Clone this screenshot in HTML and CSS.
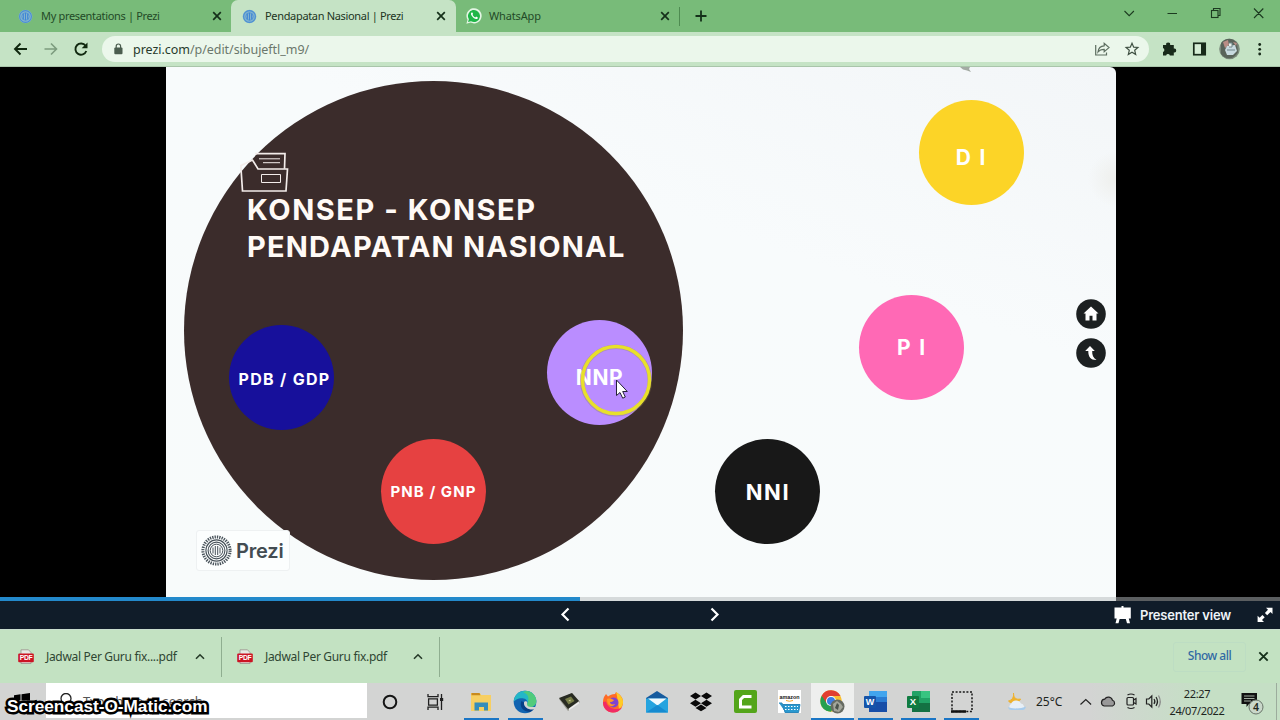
FILE: index.html
```html
<!DOCTYPE html>
<html lang="id">
    <head>
        <meta charset="utf-8">
        <title>Pendapatan Nasional | Prezi</title>
        <link rel="stylesheet" href="styles.css">
    </head>
    <body>
        <!-- shared shapes -->
        <svg class="defs" width="0" height="0">
            <symbol id="x" viewBox="0 0 10 10"><path d="M1.2 1.2l7.6 7.6M8.8 1.2L1.2 8.8" stroke="#15301a" stroke-width="1.7"/></symbol>
            <symbol id="prezi" viewBox="0 0 16 16">
                <circle cx="8" cy="8" r="7.3" fill="#84b4cf"/>
                <circle cx="8" cy="8" r="6.3" fill="none" stroke="#4a8fd4" stroke-width="1.2"/>
                <circle cx="8" cy="8" r="4" fill="none" stroke="#4a8fd4" stroke-width=".8"/>
                <path d="M5.7 5v6M8 4v8M10.3 5v6" stroke="#3f86d6" stroke-width="1.1"/>
            </symbol>
        </svg>

        <div class="tabs">
            <div class="tab">
                <svg class="fav" width="15" height="15"><use href="#prezi"/></svg>
                <span class="name">My presentations | Prezi</span>
                <svg class="close" width="10" height="10"><use href="#x"/></svg>
            </div>
            <div class="tab active">
                <svg class="fav" width="15" height="15"><use href="#prezi"/></svg>
                <span class="name">Pendapatan Nasional | Prezi</span>
                <svg class="close" width="10" height="10"><use href="#x"/></svg>
            </div>
            <div class="tab last">
                <svg class="fav" width="16" height="16" viewBox="0 0 16 16">
                    <path d="M.4 15.7l1.1-4A7.6 7.6 0 1 1 4.6 14.6z" fill="#e4f6e4"/>
                    <path d="M2 14.1l.9-2.9A6 6 0 1 1 5 13.2z" fill="#20b648"/>
                    <path d="M5.6 4.5c-1 .7-.8 2 .3 3.6 1.4 2 3.2 3.2 4.6 3 1-.2 1.5-1 1.3-1.7l-1.7-.8-.8.9C8 9 7 8 6.5 6.8l.6-.8-.7-1.6z" fill="#fff"/>
                </svg>
                <span class="name">WhatsApp</span>
                <svg class="close" width="10" height="10"><use href="#x"/></svg>
            </div>
            <svg class="plus" width="12" height="12" viewBox="0 0 12 12"><path d="M6 .5v11M.5 6h11" stroke="#15301a" stroke-width="1.8"/></svg>
            <svg class="win" width="156" height="32" viewBox="1116 0 156 32" fill="none" stroke="#1c3a20" stroke-width="1.1">
                <path d="M1124.5 11l4.7 4.7 4.7-4.7M1167.5 13.5h9.5"/>
                <rect x="1211.5" y="10.5" width="6.5" height="7"/>
                <path d="M1213.5 10.5v-2h6.5v7h-2M1254 8.500l9.300 9.500M1263.300 8.500l-9.300 9.500"/>
            </svg>
        </div>

        <div class="toolbar">
            <svg class="nav" width="102" height="34" viewBox="0 32 102 34" fill="none" stroke="#10280f" stroke-width="1.9">
                <path d="M27 49H15.500M20.500 43.500L15 49l5.500 5.500"/>
                <path d="M44.500 49H56M51 43.500l5.500 5.500-5.500 5.500" stroke="#7c9c7e" stroke-width="1.6"/>
                <path d="M85.600 45.800A5.600 5.600 0 1 0 86.300 51"/>
                <path d="M87.500 42.500v5.800h-5.800z" fill="#10280f" stroke="none"/>
            </svg>
            <div class="address">
                <svg width="9" height="12" viewBox="0 0 9 12"><rect x=".3" y="4.5" width="8.2" height="6.7" rx="1" fill="#4b5d4f"/><path d="M2.200 5V3.200a2.200 2.200 0 0 1 4.400 0V5" fill="none" stroke="#4b5d4f" stroke-width="1.2"/></svg>
                <span class="url"><b>prezi.com</b>/p/edit/sibujeftl_m9/</span>
                <svg class="share" width="46" height="16" viewBox="1094 41 46 16" fill="none" stroke="#5d6e60" stroke-width="1.2">
                    <path d="M1095.700 45v10h10.800v-2.500"/>
                    <path d="M1098 52c.4-4 2.500-6 6.200-6.200v-2.400l4.800 4.200-4.800 4.200v-2.500c-2.900 0-4.800.8-6.200 2.700z"/>
                    <path d="M1132 43.200l1.700 4 4.200.3-3.200 2.800 1 4.200-3.700-2.300-3.700 2.300 1-4.200-3.200-2.800 4.200-.3z" stroke="#3f5042"/>
                </svg>
            </div>
            <svg class="ext" width="120" height="34" viewBox="1156 32 120 34">
                <path d="M1163 45h3.200a2 2 0 1 1 3.900 0h3.700v3.600a2 2 0 1 1 0 3.900v3h-3.900a2 2 0 0 0-3.800 0H1163v-3.600a2 2 0 0 0 0-3.800z" fill="#182a1a"/>
                <rect x="1193.800" y="43.300" width="11.400" height="11.400" fill="#d5edd5" stroke="#182a1a" stroke-width="1.7"/>
                <rect x="1201" y="43" width="5" height="12" fill="#182a1a"/>
                <circle cx="1229.500" cy="49" r="10.300" fill="#7b8a7c"/>
                <path d="M1221 43c5-6 12-5 16 0l1 9c-4 8-13 8-17 2z" fill="#59645a"/>
                <path d="M1223 42l5-2 1 5-4 3zM1233 42l4 1-1 3z" fill="#b98d85"/>
                <path d="M1227 46l8-1 2 6-4 4h-6l-2-5z" fill="#c8dadf"/>
                <path d="M1229 43h3v4h-3M1227 50h8" fill="#e9f0eb" stroke="#70868a"/>
                <circle cx="1259.700" cy="44.500" r="1.4" fill="#182a1a"/><circle cx="1259.700" cy="49.300" r="1.4" fill="#182a1a"/><circle cx="1259.700" cy="54" r="1.4" fill="#182a1a"/>
            </svg>
        </div>

        <div class="stage">
            <div class="slide">
                <div class="big"></div>
                <svg class="folder" width="52" height="44" viewBox="238 150 52 44" fill="none" stroke="#f3ecea" stroke-width="1.7">
                    <path d="M241 168.500v-3l11.500-5.500 5.500 9h29.500l-1.500 22h-43.500z"/>
                    <path d="M255 153.700h30l-.5 15"/>
                    <path d="M259 158.800h21M263 162.700h17M261.500 174.500h19v8h-19z" stroke-width="1"/>
                </svg>
                <h1 class="title"><span class="l1">KONSEP - KONSEP</span><br><span class="l2">PENDAPATAN NASIONAL</span></h1>
                <div class="node pdb">PDB / GDP</div>
                <div class="node pnb">PNB / GNP</div>
                <div class="node nnp">NNP</div>
                <div class="node nni">NNI</div>
                <div class="node pi">P I</div>
                <div class="node di">D I</div>
                <div class="logo">
                    <svg width="31" height="31" viewBox="0 0 31 31" fill="none" stroke="#48525a">
                        <circle cx="15.5" cy="15.5" r="13.6" stroke-width="3" stroke-dasharray="1.336 1.037"/>
                        <circle cx="15.5" cy="15.5" r="10.6" stroke-width="1.1"/>
                        <circle cx="15.5" cy="15.5" r="8.4" stroke-width="1.1"/>
                        <circle cx="15.5" cy="15.5" r="6.3" stroke-width="1"/>
                        <path d="M12 12.500v6M14.300 11v9M16.700 11v9M19 12.500v6" stroke-width="1"/>
                    </svg>
                    <span>Prezi</span>
                </div>
                <svg class="speck" width="14" height="7" viewBox="0 0 14 7"><path d="M1 0h10l-1 2 2 3-4-1.500-4-1z" fill="#a3aaa3"/></svg>
                <div class="controls">
                    <svg width="30" height="30" viewBox="0 0 30 30"><circle cx="15" cy="15" r="14.8" fill="#1c2021"/><path d="M15 7.500l7.500 7h-2v7h-4v-4.800h-3v4.800h-4v-7h-2z" fill="#fff"/></svg>
                    <svg width="30" height="30" viewBox="0 0 30 30"><circle cx="15" cy="15" r="14.8" fill="#1c2021"/><path d="M14 8l4.800 5h-2.600c-.2 4 1 7 4.300 9-5.500.2-8.400-3-8.200-9H9.200z" fill="#fff"/></svg>
                </div>
                <svg class="pointer" width="74" height="74" viewBox="0 0 74 74">
                    <circle cx="37" cy="37.5" r="33.8" fill="none" stroke="#8c8448" stroke-opacity=".35" stroke-width="4.5"/>
                    <circle cx="37" cy="37" r="33.5" fill="none" stroke="#e8e02a" stroke-width="3.4"/>
                    <path d="M37.500 37v15.500l3.500-3 2.700 5.700 2.600-1.200-2.600-5.500h4.600z" fill="#fff" stroke="#252038" stroke-width="1"/>
                </svg>
            </div>
        </div>
        <div class="progress"><div class="done"></div></div>
        <div class="player">
            <svg class="arrows" width="170" height="28" viewBox="555 601 170 28" fill="none" stroke="#fff" stroke-width="2.2"><path d="M568.500 608.500l-6 6 6 6M711.500 608.500l6 6-6 6"/></svg>
            <svg class="easel" width="18" height="18" viewBox="0 0 18 18" fill="#fff"><path d="M7.500 0h2v1.500h7.300v11h-2l1.200 4.800h-3L11.800 13H5.600l-1.100 4.300h-3l1.200-4.800H.5v-11h7z"/></svg>
            <span class="view">Presenter view</span>
            <svg class="full" width="16" height="16" viewBox="0 0 16 16"><path d="M9 .7h6.500V7l-2-2-3.300 3.200-2.300-2.300L11 2.700zM7 15H.6V8.700l2 2L5.400 8l2.300 2.300L5 13z" fill="#fff"/></svg>
        </div>

        <div class="downloads">
            <div class="file">
                <svg width="16" height="16" viewBox="0 0 16 16">
                    <path d="M3 .8h7.500L13 3.500V14.500H3z" fill="#e6e9e4" stroke="#9a8f8c" stroke-width=".8"/>
                    <rect x=".2" y="4.5" width="15.6" height="8.8" rx="1" fill="#cc1424"/>
                    <text x="8" y="11.4" text-anchor="middle" font-family="Liberation Sans, sans-serif" font-weight="bold" font-size="6.8" fill="#fff">PDF</text>
                </svg>
                <span>Jadwal Per Guru fix....pdf</span>
                <svg class="up" width="10" height="7" viewBox="0 0 10 7"><path d="M1 5.800l4-4 4 4" fill="none" stroke="#263a29" stroke-width="1.6"/></svg>
            </div>
            <div class="file">
                <svg width="16" height="16" viewBox="0 0 16 16">
                    <path d="M3 .8h7.500L13 3.500V14.500H3z" fill="#e6e9e4" stroke="#9a8f8c" stroke-width=".8"/>
                    <rect x=".2" y="4.5" width="15.6" height="8.8" rx="1" fill="#cc1424"/>
                    <text x="8" y="11.4" text-anchor="middle" font-family="Liberation Sans, sans-serif" font-weight="bold" font-size="6.8" fill="#fff">PDF</text>
                </svg>
                <span>Jadwal Per Guru fix.pdf</span>
                <svg class="up" width="10" height="7" viewBox="0 0 10 7"><path d="M1 5.800l4-4 4 4" fill="none" stroke="#263a29" stroke-width="1.6"/></svg>
            </div>
            <div class="all">Show all</div>
            <svg class="hide" width="11" height="11"><use href="#x"/></svg>
        </div>

        <div class="taskbar">
            <div class="start"><svg width="16" height="16" viewBox="0 0 16 16"><path d="M0 2.300l6.500-1v6.200H0zM7.500 1.200L16 0v7.500H7.500zM0 8.500h6.500v6.200L0 13.700zM7.500 8.500H16V16l-8.500-1.200z"/></svg></div>
            <div class="search">
                <svg width="14" height="16" viewBox="0 0 14 16"><circle cx="7" cy="5.5" r="5" fill="none" stroke="#222" stroke-width="1.3"/><path d="M3.500 9.500L0 14" stroke="#222" stroke-width="1.3"/></svg>
                <span>Type here to search</span>
            </div>
            <div class="task cortana"><svg width="16" height="16" viewBox="0 0 16 16"><circle cx="8" cy="8" r="6.3" fill="none" stroke="#151515" stroke-width="2"/></svg></div>
            <div class="task views"><svg width="17" height="16" viewBox="0 0 17 16" fill="none" stroke="#202020" stroke-width="1.3"><path d="M1 0v2.700h10V0M1 16v-2.800h10V16M1.600 4.800h8.800v6.300H1.600zM14.500 0v16"/><path d="M13 5.500h3.200" stroke-width="3"/></svg></div>
            <div class="task run">
                <svg width="22" height="22" viewBox="0 0 22 22"><path d="M1 2h9l1 2h10v16H1z" fill="#f7cf62"/><path d="M1.500 2h8l1 2.300h-9z" fill="#c88a1e"/><path d="M4.500 11.500h13.500v8h-4v-3.500h-5v3.500h-4.500z" fill="#358dbb"/></svg>
            </div>
            <div class="task run">
                <svg width="24" height="24" viewBox="0 0 24 24">
                    <circle cx="12" cy="12" r="11.3" fill="#1264b1"/>
                    <path d="M.8 12C1 5 6 .7 12 .7c7 0 11.300 5 11.300 10.300 0 4-3 6-6 6-3 0-4.300-1.200-3.300-2.600 1-1.500.7-5.400-3.500-6C5 8 1.400 10.500.8 12z" fill="#24b7c7"/>
                    <path d="M14 1c5.500.8 9.300 5.300 9.300 10 0 4-3 6-6 6-3 0-4.300-1.200-3.300-2.600C16 10 17 5 10 2z" fill="#58cf6d" opacity=".85"/>
                    <path d="M8.500 11c-2.500 5 1 10.500 8 11 2.500-.8 4.300-2.200 5.300-4-5 2.300-11.500 0-10.800-5.500z" fill="#083f86"/>
                    <path d="M11 12.500c.4-1.700 3-1.500 3.300.3-.5 1.700-.5 4 3.700 4.200h5.500l-1.800 2.200c-5 1.500-11.400-1.700-10.700-6.700z" fill="#d3d3d3"/>
                </svg>
            </div>
            <div class="task">
                <svg width="22" height="20" viewBox="0 0 22 20"><path d="M1 7l13-6 8 9-12 9z" fill="#999990"/><path d="M1 6l13-5 7 8-11 8z" fill="#282b22"/><path d="M7 7l6-2.500 3.500 4.500-6 3.500z" fill="#777d48"/><path d="M10.500 8.500l2-1v2z" fill="#d5db99"/><path d="M11 16.500l10-7v2l-10 7z" fill="#eee"/></svg>
            </div>
            <div class="task">
                <svg width="22" height="22" viewBox="0 0 22 22"><path d="M2 6l2-3 2 2.500C8 4 10 3 13 3l1-2c5 3 7 6 7 10 0 6-4 10.500-10 10.500S1 17 1 11.500c0-2 .4-4 1-5.500z" fill="#ff6b26"/><path d="M14 1c5 3 7.500 7 7 11-.5 3-2 5-4 6l-2-13z" fill="#ffcb27"/><path d="M1 11c0 6 4 10.500 10 10.500 4 0 7-2 9-5-5 3-14 2-16-6z" fill="#f12b64"/><circle cx="11.5" cy="11.5" r="5" fill="#8044cf"/><path d="M5 8c3-1 5 0 7 1-1 1.500-2 2-4 2 0 2 2 3 5 2-2 4-8 2.500-8-5z" fill="#ff9a24"/></svg>
            </div>
            <div class="task">
                <svg width="24" height="22" viewBox="0 0 24 22"><path d="M1 7L12 0l11 7v4H1z" fill="#165b9e"/><path d="M1 7.500V21.500h22V7.500z" fill="#25a4df"/><path d="M3 7.500h18.500L12.500 14.500z" fill="#f0fafe"/><path d="M1 21.500L12.500 14 23 21.500z" fill="#168bd0"/></svg>
            </div>
            <div class="task">
                <svg width="22" height="20" viewBox="0 0 22 20" fill="#090909"><path d="M5.500.5L11 4 5.500 7.500 0 4zM16.500.5L22 4l-5.500 3.500L11 4zM5.500 7.800L11 11.200l-5.500 3.500L0 11.200zM16.500 7.800l5.500 3.400-5.500 3.500-5.500-3.500zM11 12.500l5.500 3.400L11 19.300l-5.500-3.400z"/></svg>
            </div>
            <div class="task">
                <svg width="23" height="23" viewBox="0 0 23 23"><rect width="23" height="23" rx="2" fill="#53a51a"/><path d="M17.500 6.500H9.500l-3 3v7.500h11" fill="none" stroke="#fff" stroke-width="3"/></svg>
            </div>
            <div class="task">
                <svg width="23" height="23" viewBox="0 0 23 23"><rect width="23" height="23" fill="#fff"/><text x="11.5" y="8.6" text-anchor="middle" font-family="Liberation Sans, sans-serif" font-weight="bold" font-size="5.6" textLength="20" lengthAdjust="spacingAndGlyphs" fill="#151515">amazon</text><path d="M8 10.500q3.500 1.500 7 0" fill="none" stroke="#f3a229"/><path d="M1 13h3l2 7M5 14.500h17l-1.500 8H7z" fill="#2a99cf" stroke="#2a87bb"/><path d="M7 16.500h13M7 19.500h13" stroke="#fff" stroke-dasharray="1.5 1.5"/></svg>
            </div>
            <div class="task office run current">
                <svg width="25" height="24" viewBox="0 0 25 24">
                    <circle cx="11" cy="11" r="10.7" fill="#f8bf2f"/>
                    <path d="M1.700 5.700A10.700 10.700 0 0 0 11 21.700l4.600-8z" fill="#26a050"/>
                    <path d="M1.700 5.700l5 7.500L11 6h9.500A10.700 10.700 0 0 0 1.700 5.700z" fill="#e13f31"/>
                    <circle cx="11" cy="11" r="5" fill="#fff"/><circle cx="11" cy="11" r="4" fill="#3c7de4"/>
                    <circle cx="17.5" cy="16.5" r="7" fill="#666b62"/><path d="M13 14l4-3 4 3 2 3-4 5-5-1z" fill="#a3a69b"/><path d="M17 13l2 2-1 5-3-2z" fill="#4b534c"/>
                </svg>
            </div>
            <div class="task office run">
                <svg width="23" height="22" viewBox="0 0 23 22"><rect x="5" width="18" height="21" rx="1" fill="#2b7cd3"/><path d="M5 0h18v6H5z" fill="#42a5ee"/><path d="M5 11h18v10H5z" fill="#174ea8"/><rect y="5" width="12" height="12" rx="1" fill="#1554a9"/><text x="6" y="14.2" text-anchor="middle" font-family="Liberation Sans, sans-serif" font-weight="bold" font-size="9" fill="#fff">W</text></svg>
            </div>
            <div class="task office run">
                <svg width="23" height="22" viewBox="0 0 23 22"><rect x="5" width="18" height="21" rx="1" fill="#21a366"/><path d="M14 0h9v7h-9z" fill="#38c481"/><path d="M5 12h18v9H5z" fill="#147143"/><rect y="5" width="12" height="12" rx="1" fill="#107c41"/><text x="6" y="14.2" text-anchor="middle" font-family="Liberation Sans, sans-serif" font-weight="bold" font-size="9.5" fill="#fff">X</text></svg>
            </div>
            <div class="task office run">
                <svg width="22" height="22" viewBox="0 0 22 22"><rect x="1" y="1" width="20" height="19.5" fill="none" stroke="#161616" stroke-width="1.5" stroke-dasharray="2 1.6"/><path d="M0 20.500h15" stroke="#111" stroke-width="2.5"/></svg>
            </div>
            <div class="tray">
                <svg width="21" height="19" viewBox="0 0 21 19"><path d="M6.500 1c-.2 5 3 7 7 6-1 4-9 6-12 2 4-1 5.500-4 5-8z" fill="#efb22d" stroke="#efb22d"/><path d="M4 18a3.500 3.500 0 0 1 0-6 5.500 5.500 0 0 1 10-.5A3.800 3.800 0 0 1 16 18z" fill="#e7eff6"/><path d="M1 15c3 2 13 2 18-.5-.5 2-1.500 3.500-3 3.500H4c-1.500 0-2.500-1-3-3z" fill="#a8ccec"/></svg>
                <span class="temp">25°C</span>
                <svg class="icons" width="90" height="24" viewBox="1076 690 90 24" fill="none" stroke="#222" stroke-width="1.2">
                    <path d="M1080.500 704.500l5.300-5 5.300 5"/>
                    <path d="M1105 706h7.500a3 3 0 0 0 0-5.700 4.300 4.300 0 0 0-7.800-1.200 3.500 3.500 0 0 0-.5 6.900z" fill="#999"/>
                    <rect x="1127" y="697.5" width="6.5" height="7.5" rx="1"/><path d="M1133.500 700l2.500-1.500v5.500l-2.500-1.500M1127.500 695q3.500-2 7 0M1127.500 707.500q3.500 2 7 0"/>
                    <path d="M1146.500 699h2.300l3-3v11l-3-3h-2.300zM1154 699q1.800 2.500 0 5M1156 697q3 4.500 0 9"/><path d="M1158.500 695.500q3.500 6 0 12" stroke="#888"/>
                </svg>
                <div class="clock"><span>22:27</span><span>24/07/2022</span></div>
                <svg class="notes" width="27" height="26" viewBox="1238 690 27 26"><path d="M1241.500 694h15.500v11h-8l-2.500 3v-3h-5z" fill="#111"/><path d="M1244 697h10.500M1244 699.500h10.500M1244 702h7" stroke="#c8d6c7" stroke-width=".8"/><circle cx="1256" cy="708" r="7" fill="#c9d7c9" stroke="#69756a"/><text x="1256" y="712" text-anchor="middle" font-family="Noto Sans, sans-serif" font-size="10.5" font-weight="600" fill="#202820">4</text></svg>
            </div>
        </div>
        <div class="watermark">Screencast-O-Matic.com</div>
    </body>
</html>
```
FILE: styles.css
```css
body {
    margin: 0;
    width: 1280px;
    height: 720px;
    overflow: hidden;
    position: relative;
    display: flex;
    flex-direction: column;
    font-family: "Noto Sans", sans-serif;
    background: #000;
}
svg {
    display: block;
    flex: none;
}
.defs {
    position: absolute;
}
span {
    white-space: nowrap;
}
/* browser tabs */
.tabs {
    height: 32px;
    display: flex;
    align-items: center;
    background: #78bb79;
}
.tab {
    width: 231px;
    height: 32px;
    box-sizing: border-box;
    display: flex;
    align-items: center;
    padding: 0 9px 0 18px;
    font-size: 11px;
    letter-spacing: -0.33px;
    color: #234a27;
}
.tab.active {
    width: 225px;
    padding: 0 10px 0 11px;
    background: #c5e3c5;
    border-radius: 7px 7px 0 0;
    color: #21351f;
}
.tab.last {
    width: 224px;
    height: 19px;
    padding: 0 9px 0 10px;
    border-right: 1px solid #4e8b51;
    letter-spacing: -0.15px;
}
.name {
    margin-left: 8px;
    margin-top: -2px;
}
.tab.last .name {
    margin-left: 7px;
}
.close {
    margin-left: auto;
}
.plus {
    margin-left: 15px;
}
.win {
    margin-left: auto;
    margin-right: 8px;
}
/* address row */
.toolbar {
    height: 34px;
    display: flex;
    align-items: center;
    background: #c5e3c5;
    border-bottom: 1px solid #a9c5aa;
}
.address {
    width: 1047px;
    height: 26px;
    box-sizing: border-box;
    border-radius: 13px;
    background: #ebf7eb;
    display: flex;
    align-items: center;
    padding: 0 9px 0 12px;
}
.url {
    margin-left: 10px;
    font-size: 12.5px;
    letter-spacing: -0.04px;
    color: #6b776c;
}
.url b {
    font-weight: normal;
    color: #283a2b;
}
.share {
    margin-left: auto;
}
.ext {
    margin-left: 7px;
}
/* presentation */
.stage {
    height: 530px;
    background: #000;
    padding-left: 166px;
}
.slide {
    position: relative;
    width: 950px;
    height: 530px;
    overflow: hidden;
    border-radius: 0 6px 0 0;
    background: radial-gradient(circle at 950px 112px, #eeefec, rgba(238,239,236,0) 28px), linear-gradient(200deg, #f3f6f8, #f8fbfc 35%, #f8fbfb);
}
.big {
    position: absolute;
    left: 18px;
    top: 14px;
    width: 499px;
    height: 499px;
    border-radius: 50%;
    background: #3b2c2b;
}
.folder {
    position: absolute;
    left: 72px;
    top: 83px;
}
.title {
    position: absolute;
    left: 81px;
    top: 124px;
    margin: 0;
    font: 700 29px/37px Inter, sans-serif;
    color: #fffaf6;
}
.l1 {
    letter-spacing: 1.55px;
}
.l2 {
    letter-spacing: 1.2px;
}
.node {
    position: absolute;
    width: 105px;
    height: 105px;
    box-sizing: border-box;
    border-radius: 50%;
    display: flex;
    align-items: center;
    justify-content: center;
    font: 700 22px Inter, sans-serif;
    color: #fff;
    white-space: pre;
}
.pdb {
    left: 63px;
    top: 258px;
    font-size: 16px;
    letter-spacing: 1.3px;
    background: #17109b;
    padding-left: 6px;
    padding-top: 2px;
}
.pnb {
    left: 215px;
    top: 372px;
    font-size: 15px;
    letter-spacing: 1.05px;
    background: #e64141;
}
.nnp {
    left: 381px;
    top: 253px;
    padding-top: 9px;
    font-size: 21px;
    letter-spacing: 0.6px;
    background: #ba8dff;
}
.nni {
    left: 549px;
    top: 372px;
    letter-spacing: 1.6px;
    padding-left: 1px;
    background: #181818;
}
.pi {
    left: 693px;
    top: 228px;
    font-size: 21px;
    letter-spacing: 1.8px;
    padding-left: 1px;
    background: #ff69b5;
}
.di {
    left: 753px;
    top: 33px;
    background: #fcd427;
    font-size: 21px;
    letter-spacing: 1.8px;
    padding-top: 9px;
}
.logo {
    position: absolute;
    left: 30px;
    top: 463px;
    width: 94px;
    height: 41px;
    box-sizing: border-box;
    padding-left: 4px;
    display: flex;
    align-items: center;
    border: 1px solid #eef1f2;
    border-radius: 3px;
    background: #fcfefe;
}
.logo span {
    margin-left: 4px;
    font: 600 20px Inter, sans-serif;
    letter-spacing: -0.2px;
    color: #434c52;
}
.speck {
    position: absolute;
    left: 793px;
    top: 0;
}
.controls {
    position: absolute;
    left: 910px;
    top: 232px;
    display: flex;
    flex-direction: column;
    gap: 9px;
}
.pointer {
    position: absolute;
    left: 413px;
    top: 276px;
}
.progress {
    height: 4px;
    background: linear-gradient(90deg, #d6dadb 1116px, #5b5e60 1116px);
}
.done {
    width: 580px;
    height: 4px;
    background: #2389cb;
}
.player {
    height: 28px;
    display: flex;
    align-items: center;
    background: #101c29;
    color: #eef3f8;
}
.arrows {
    margin-left: 555px;
}
.easel {
    margin-left: 389px;
}
.view {
    margin-left: 8px;
    font: 600 13px Inter, sans-serif;
    letter-spacing: -0.2px;
}
.full {
    margin-left: auto;
    margin-right: 7px;
}
/* download shelf */
.downloads {
    height: 54px;
    display: flex;
    align-items: center;
    background: #c3e2c2;
    border-top: 1px solid #c9dccd;
    box-sizing: border-box;
}
.file {
    width: 218px;
    height: 40px;
    box-sizing: border-box;
    border-right: 1px solid #8fae90;
    display: flex;
    align-items: center;
    padding: 0 16px 0 15px;
    font-size: 12px;
    letter-spacing: -0.32px;
    color: #2f4632;
}
.file:first-child {
    width: 222px;
    padding-left: 18px;
}
.file span {
    margin-left: 12px;
}
.up {
    margin-left: auto;
}
.all {
    margin-left: auto;
    width: 73px;
    height: 30px;
    box-sizing: border-box;
    border: 1px solid #bdddc3;
    border-radius: 3px;
    font: 500 12px/26px "Noto Sans", sans-serif;
    letter-spacing: -0.5px;
    text-align: center;
    color: #3169a4;
}
.hide {
    margin: -1px 11px 0 12px;
}
/* taskbar */
.taskbar {
    height: 37px;
    display: flex;
    background: linear-gradient(90deg, #d3d4d3 1090px, #c5dfc5 1200px);
}
.start {
    width: 46px;
    box-sizing: border-box;
    padding: 10px 0 0 14px;
}
.search {
    width: 321px;
    height: 35px;
    box-sizing: border-box;
    background: #fff;
    display: flex;
    align-items: center;
    padding-left: 13px;
    font-size: 13px;
    color: #555;
}
.search span {
    margin-left: 10px;
}
.task {
    width: 44px;
    height: 37px;
    box-sizing: border-box;
    display: flex;
    align-items: center;
    justify-content: center;
}
.cortana {
    width: 46px;
}
.views {
    width: 46px;
    padding-right: 2px;
}
.run {
    background: linear-gradient(#1a76c5, #1a76c5) center bottom / 35px 2px no-repeat;
}
.office {
    width: 43px;
}
.current {
    background: linear-gradient(#1a76c5, #1a76c5) center bottom / 43px 2px no-repeat, #eeefee;
}
.tray {
    flex: 1;
    display: flex;
    align-items: center;
    margin-left: 24px;
    margin-right: 3px;
    border-right: 1px solid #9cac9d;
    color: #1d241e;
}
.temp {
    width: 28px;
    margin-left: 8px;
    font-size: 12px;
}
.icons {
    margin-left: 12px;
}
.clock {
    width: 62px;
    display: flex;
    flex-direction: column;
    align-items: center;
    line-height: 17px;
    font-size: 11px;
    letter-spacing: -0.35px;
}
.notes {
    margin-left: auto;
    margin-right: 11px;
}
.watermark {
    position: absolute;
    left: 7px;
    top: 696px;
    font: bold 17.2px/20px "Liberation Sans", sans-serif;
    color: #fff;
    white-space: nowrap;
    -webkit-text-stroke: 5px #000;
    paint-order: stroke fill;
}
```
